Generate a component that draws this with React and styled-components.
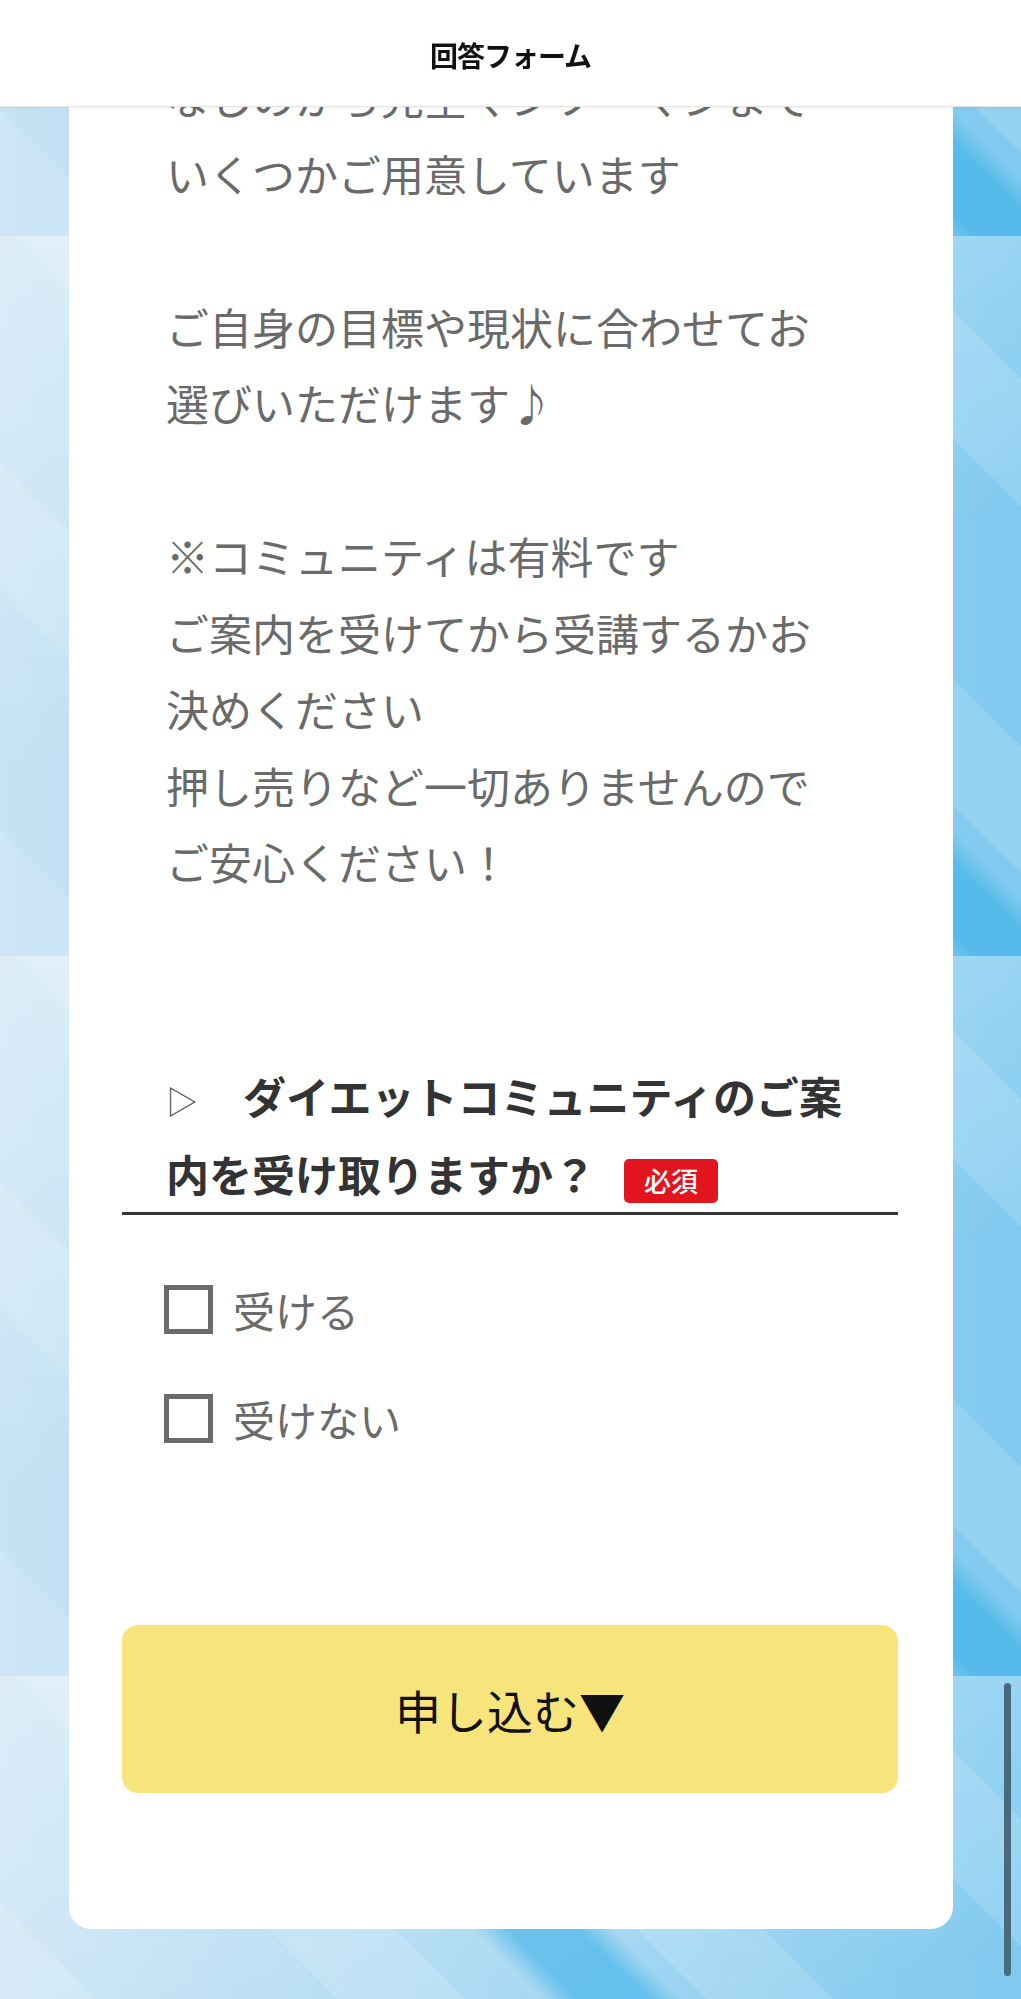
import React from 'react'
import styled, { createGlobalStyle } from 'styled-components'

const GlobalStyle = createGlobalStyle`
    html, body {
        margin: 0;
        padding: 0;
        overflow: hidden;
    }
    body {
        font-family: "Noto Sans CJK JP", "Noto Sans", sans-serif;
    }
    * {
        box-sizing: border-box;
    }
`

const Page = styled.div`
    position: relative;
    height: 1999px;
    overflow: hidden;
    padding: 0 68px 0 69px;
    background:
        linear-gradient(45deg, transparent 54%, rgba(40, 170, 230, 0.5) 56%, rgba(40, 170, 230, 0.5) 60%, transparent 62%) 0 236px / 100% 720px repeat-y,
        repeating-linear-gradient(45deg, rgba(255, 255, 255, 0.14) 0 90px, rgba(255, 255, 255, 0) 90px 260px) 0 236px / 100% 720px repeat-y,
        linear-gradient(165deg, rgba(255, 255, 255, 0.4), rgba(255, 255, 255, 0) 55%) 0 236px / 100% 720px repeat-y,
        linear-gradient(90deg, #c6e2f4 0%, #a8d8f2 45%, #80caef 100%);
`

const Header = styled.header`
    position: fixed;
    top: 0;
    left: 0;
    right: 0;
    height: 107px;
    z-index: 10;
    display: flex;
    align-items: center;
    justify-content: center;
    padding-top: 4px;
    background: #ffffff;
    border-bottom: 1px solid #e4e4e4;
    box-shadow: 0 1px 3px rgba(0, 0, 0, 0.05);
    & h1 {
        margin: 0;
        font-size: 28px;
        font-weight: 700;
        color: #111111;
        letter-spacing: -1px;
    }
`

const Card = styled.main`
    width: 884px;
    background: #ffffff;
    border-radius: 0 0 22px 22px;
    padding: 58px 55px 136px 53px;
`

const Intro = styled.p`
    margin: 0;
    padding-left: 44px;
    font-size: 43px;
    line-height: 76.5px;
    color: #6a6a6a;
    white-space: nowrap;
`

const Question = styled.h2`
    margin: 156px 0 0;
    padding-left: 44px;
    font-size: 43px;
    line-height: 78px;
    font-weight: 700;
    color: #333333;
    white-space: nowrap;
    border-bottom: 3px solid #333333;
`

const Marker = styled.span`
    display: inline-block;
    width: 34px;
    font-size: 32px;
    line-height: 1;
    font-weight: 400;
    color: #555555;
`

const Required = styled.span`
    display: inline-block;
    margin-left: 28px;
    padding: 0 20px;
    height: 44px;
    line-height: 44px;
    font-size: 27px;
    font-weight: 500;
    color: #ffffff;
    background: #e2141d;
    border-radius: 5px;
`

const Options = styled.div`
    display: flex;
    flex-direction: column;
    padding: 40px 0 0 42px;
`

const Option = styled.label`
    display: flex;
    align-items: center;
    gap: 20px;
    height: 109px;
    font-size: 42px;
    color: #6a6a6a;
`

const Box = styled.input.attrs({ type: 'checkbox' })`
    appearance: none;
    margin: 0;
    width: 49px;
    height: 49px;
    border: 5px solid #6b6b6b;
    background: #ffffff;
`

const Submit = styled.button`
    display: block;
    width: 100%;
    height: 168px;
    margin-top: 152px;
    border: none;
    border-radius: 16px;
    background: #f8e47c;
    font-family: inherit;
    font-size: 46px;
    color: #111111;
    cursor: pointer;
`

const ScrollThumb = styled.div`
    position: absolute;
    right: 10px;
    top: 1683px;
    width: 7px;
    height: 293px;
    border-radius: 4px;
    background: #4b697e;
`

const App = () => {
    return (
        <Page>
            <GlobalStyle/>
            <Header><h1>回答フォーム</h1></Header>
            <Card>
                <Intro>
                    なしのから完全マンツーマンまで<br/>
                    いくつかご用意しています<br/>
                    <br/>
                    ご自身の目標や現状に合わせてお<br/>
                    選びいただけます♪<br/>
                    <br/>
                    ※コミュニティは有料です<br/>
                    ご案内を受けてから受講するかお<br/>
                    決めください<br/>
                    押し売りなど一切ありませんので<br/>
                    ご安心ください！
                </Intro>
                <Question>
                    <Marker>▷</Marker>　ダイエットコミュニティのご案<br/>
                    内を受け取りますか？<Required>必須</Required>
                </Question>
                <Options>
                    <Option><Box/>受ける</Option>
                    <Option><Box/>受けない</Option>
                </Options>
                <Submit type="button">申し込む▼</Submit>
            </Card>
            <ScrollThumb/>
        </Page>
    )
}

export default App
